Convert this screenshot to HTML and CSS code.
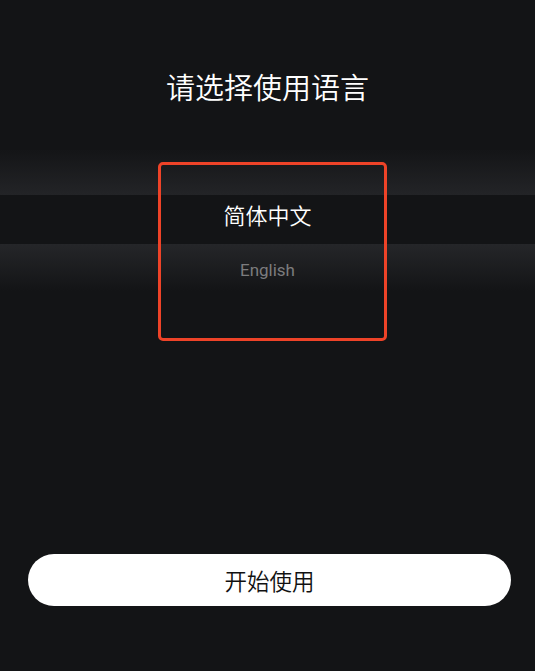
FILE: index.html
```html
<!DOCTYPE html>
<html lang="zh-CN">
<head>
<meta charset="utf-8">
<title>请选择使用语言</title>
<link rel="stylesheet" href="styles.css">
</head>
<body>
<main class="screen">
  <h1 class="title">请选择使用语言</h1>
  <section class="picker">
    <div class="option option-selected">简体中文</div>
    <div class="option option-other">English</div>
    <div class="highlight"></div>
  </section>
  <button class="start-btn" type="button">开始使用</button>
</main>
</body>
</html>
```
FILE: styles.css
```css
html, body {
  margin: 0;
  padding: 0;
  background: #131416;
}
.screen {
  height: 671px;
  display: flex;
  flex-direction: column;
  font-family: Roboto, "Noto Sans CJK SC", sans-serif;
  color: #fff;
}
.title {
  margin: 66px 0 0;
  font-family: "Noto Sans CJK SC", sans-serif;
  font-weight: 350;
  font-size: 29px;
  line-height: 40px;
  text-align: center;
  color: #fff;
}
.picker {
  position: relative;
  margin-top: 44px;
  height: 141px;
  background: linear-gradient(to bottom,
    #141517 0px, #232427 45px,
    #131416 45px, #131416 94px,
    #252629 94px, #131416 141px);
}
.option {
  text-align: center;
  line-height: 30px;
}
.option-selected {
  padding-top: 49px;
  font-family: "Noto Sans CJK SC", sans-serif;
  font-weight: 350;
  font-size: 22px;
  color: #fff;
}
.option-other {
  margin-top: 26px;
  font-family: Roboto, sans-serif;
  font-size: 17px;
  color: #7c7c7e;
}
.highlight {
  position: absolute;
  left: 158px;
  top: 12px;
  width: 229px;
  height: 179px;
  box-sizing: border-box;
  border: 3.5px solid #ee4328;
  border-radius: 5px;
}
.start-btn {
  margin: auto 24px 65px 28px;
  height: 52px;
  border: none;
  border-radius: 26px;
  background: #fff;
  color: #111;
  font-family: "Noto Sans CJK SC", sans-serif;
  font-weight: 350;
  font-size: 22.5px;
  line-height: 52px;
  padding: 0;
  cursor: pointer;
}
```
